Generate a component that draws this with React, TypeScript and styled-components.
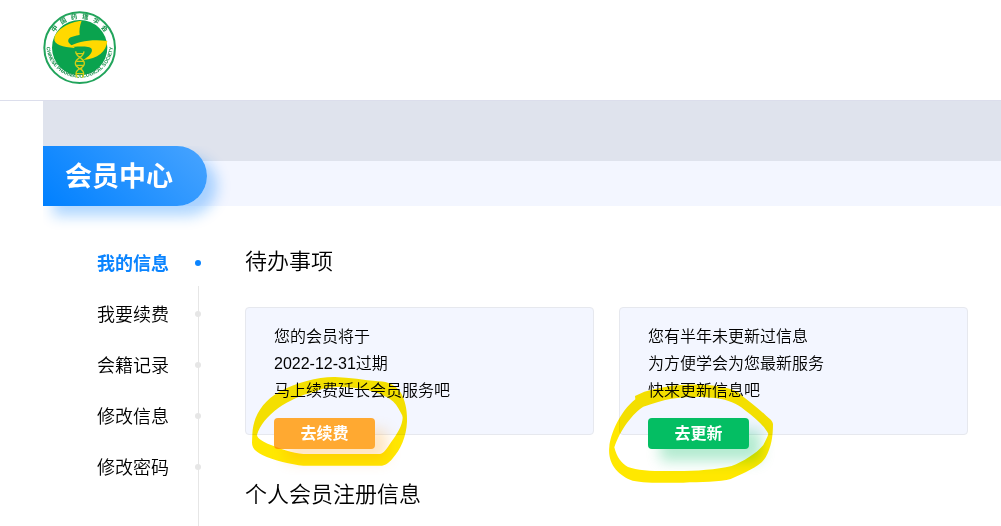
import React from 'react';
import styled, { createGlobalStyle } from 'styled-components';

const GlobalStyle = createGlobalStyle`
  *, *::before, *::after { box-sizing: border-box; }
  body {
    margin: 0;
    background: #fff;
    color: #000;
    font-family: "Liberation Sans", "Noto Sans CJK SC", sans-serif;
    font-weight: 350;
  }
  h1, h2, p, ul { margin: 0; padding: 0; }
  ul { list-style: none; }
`;

const Page = styled.div`
  display: flex;
  flex-direction: column;
  min-height: 100vh;
  overflow-x: hidden;
`;

const Header = styled.header`
  padding: 11px 43px 15px;
  border-bottom: 1px solid #dcdeec;
`;

const LogoLink = styled.a`
  display: block;
  width: 74px;
  height: 74px;

  svg { display: block; }
`;

const Content = styled.div`
  display: flex;
  flex-direction: column;
  flex: 1;
  margin-left: 43px;
`;

const Banner = styled.div`
  height: 60px;
  background: #dfe3ed;
`;

const TitleBar = styled.div`
  display: flex;
  align-items: flex-end;
  height: 45px;
  background: #f3f6ff;
`;

const TitleClip = styled.div`
  clip-path: inset(0 -40px -40px 0);
`;

const PageTitle = styled.h1`
  height: 60px;
  padding: 0 34px 0 22px;
  border-radius: 0 30px 30px 0;
  background: linear-gradient(45deg, #0080ff, #48a4ff);
  box-shadow: 10px 10px 14px rgba(10, 132, 255, 0.32);
  color: #fff;
  font-size: 27px;
  font-weight: 700;
  line-height: 62px;
`;

const Columns = styled.div`
  display: flex;
  flex: 1;
  gap: 44px;
  padding-right: 33px;
`;

const SideNav = styled.nav`
  position: relative;
  width: 158px;
  flex-shrink: 0;
  padding: 31px 0 0 54px;

  &::before {
    content: '';
    position: absolute;
    top: 80px;
    right: 2px;
    bottom: 0;
    width: 1px;
    background: #e6e6e6;
  }
`;

const NavLink = styled.a<{ $active?: boolean }>`
  display: flex;
  align-items: center;
  justify-content: space-between;
  height: 51px;
  color: ${({ $active }) => ($active ? '#0a84ff' : '#000')};
  font-size: 18px;
  font-weight: ${({ $active }) => ($active ? 700 : 350)};
  text-decoration: none;

  &::after {
    content: '';
    width: 6px;
    height: 6px;
    border-radius: 50%;
    background: ${({ $active }) => ($active ? '#0a84ff' : '#e6e6e6')};
  }
`;

const NavLabel = styled.span`
  padding-bottom: 2px;
`;

const Main = styled.main`
  flex: 1;
  padding: 38px 0 12px;
`;

const SectionTitle = styled.h2`
  color: #000;
  font-size: 22px;
  font-weight: 350;
  line-height: 36px;
`;

const CardGrid = styled.div`
  display: grid;
  grid-template-columns: 1fr 1fr;
  gap: 25px;
  margin: 27px 0 42px;
`;

const Card = styled.article`
  position: relative;
  height: 128px;
  padding: 15px 28px 0;
  border: 1px solid #e6e8ee;
  border-radius: 4px;
  background: #f3f6ff;
`;

const CardText = styled.p`
  font-size: 16px;
  line-height: 27px;
`;

const ActionButton = styled.button<{ $color: string; $shadow: string }>`
  display: block;
  width: 101px;
  height: 31px;
  margin-top: 14px;
  padding: 0;
  border: 0;
  border-radius: 4px;
  background: ${({ $color }) => $color};
  box-shadow: 12px 12px 14px ${({ $shadow }) => $shadow};
  color: #fff;
  font-family: inherit;
  font-size: 16px;
  font-weight: 700;
  line-height: 31px;
  cursor: pointer;
`;

const Highlight = styled.svg<{ $left: number }>`
  position: absolute;
  top: -8px;
  left: ${({ $left }) => $left}px;
  mix-blend-mode: multiply;
  pointer-events: none;
`;

const Logo = () => (
  <svg width="74" height="74" viewBox="0 0 222 222" role="img" aria-label="中国药理学会">
    <defs>
      <path id="ring-top" d="M22 111a88 88 0 0 1 176 0" />
      <path id="ring-bottom" d="M10 100a100 100 0 1 0 200 0" />
    </defs>
    <circle cx="110" cy="110" r="106" fill="#fff" stroke="#21a45b" strokeWidth="6" />
    <circle cx="110" cy="110" r="83" fill="#0aa34e" />
    <text fill="#16934c" fontSize="19" fontWeight="700" fontFamily="Noto Sans CJK SC, sans-serif">
      <textPath href="#ring-top" startOffset="50%" textAnchor="middle">中&#160;&#160; 国&#160;&#160; 药&#160;&#160; 理&#160;&#160; 学&#160;&#160; 会</textPath>
    </text>
    <text fill="#168c49" fontSize="15" fontWeight="700" fontFamily="Liberation Sans, sans-serif">
      <textPath href="#ring-bottom" startOffset="50%" textAnchor="middle">CHINESE PHARMACOLOGICAL SOCIETY</textPath>
    </text>
    <path
      fill="#ffd900"
      d="M116 29C80 32 37 56 34 82C32 103 60 108 94 111C100 108 71 99 76 86C80 75 100 75 110 71C108 60 110 44 116 29Z"
    />
    <path
      fill="#ffd900"
      d="M76 108C102 91 150 83 193 90C190 122 165 143 120 147C138 137 150 124 146 114C141 104 108 106 76 108Z"
    />
    <path
      d="M98 121c2 22 26 18 26 36s-25 13-25 31c0 5 2 9 4 12M123 121c-2 22-26 18-26 36s25 13 25 31c0 5-2 9-4 12M99 128h23M105 137h12M101 151h20M99 163h22M105 174h13M101 188h20"
      fill="none"
      stroke="#d5ce16"
      strokeWidth="4"
    />
  </svg>
);

const cards = [
  {
    lines: ['您的会员将于', '2022-12-31过期', '马上续费延长会员服务吧'],
    action: '去续费',
    color: '#ffa931',
    shadow: 'rgba(255, 169, 49, 0.3)',
    left: -11,
    stroke:
      'M52 402C54 350 82 305 135 274C185 248 250 230 300 231C345 232 385 240 430 244C455 243 484 256 498 279C510 300 517 330 516 365C514 410 497 448 472 476C460 490 450 497 436 497L205 497C170 494 115 481 82 465C62 455 51 444 51 428ZM66 405C74 375 98 348 130 324C162 302 200 284 238 276C280 254 346 260 390 268C435 280 475 294 490 325C496 337 503 345 503 353C502 375 488 400 468 427C456 446 445 462 434 462L205 462C173 459 135 446 98 431C82 423 68 417 66 405Z',
  },
  {
    lines: ['您有半年未更新过信息', '为方便学会为您最新服务', '快来更新信息吧'],
    action: '去更新',
    color: '#04be63',
    shadow: 'rgba(4, 190, 99, 0.3)',
    left: -20,
    stroke:
      'M28 440C31 405 58 336 106 298L105 288L133 275C170 265 210 255 260 254C315 253 370 256 414 276C438 300 470 319 494 343C506 355 519 362 519 373C519 408 514 442 497 472C483 498 437 517 392 537C362 547 300 545 250 548C190 549 130 549 98 542C54 526 22 490 28 440ZM43 442C50 472 65 490 84 501C115 513 170 514 230 513C290 513 350 509 395 498C430 484 468 462 490 435C496 423 503 410 505 402C496 382 470 357 434 330C410 310 384 300 350 295C310 290 260 289 215 296C190 300 160 310 130 320C100 338 60 390 43 442Z',
  },
];

const navItems = ['我的信息', '我要续费', '会籍记录', '修改信息', '修改密码'];

export default function App() {
  return (
    <Page>
      <GlobalStyle />
      <Header>
        <LogoLink href="#">
          <Logo />
        </LogoLink>
      </Header>
      <Content>
        <Banner />
        <TitleBar>
          <TitleClip>
            <PageTitle>会员中心</PageTitle>
          </TitleClip>
        </TitleBar>
        <Columns>
          <SideNav>
            <ul>
              {navItems.map((label, index) => (
                <li key={label}>
                  <NavLink href="#" $active={index === 0}>
                    <NavLabel>{label}</NavLabel>
                  </NavLink>
                </li>
              ))}
            </ul>
          </SideNav>
          <Main>
            <SectionTitle>待办事项</SectionTitle>
            <CardGrid>
              {cards.map((card) => (
                <Card key={card.action}>
                  {card.lines.map((line) => (
                    <CardText key={line}>{line}</CardText>
                  ))}
                  <ActionButton type="button" $color={card.color} $shadow={card.shadow}>
                    {card.action}
                  </ActionButton>
                  <Highlight $left={card.left} width="180" height="190" viewBox="0 0 540 570" aria-hidden="true">
                    <path d={card.stroke} fill="#ffe800" fillRule="evenodd" />
                  </Highlight>
                </Card>
              ))}
            </CardGrid>
            <SectionTitle>个人会员注册信息</SectionTitle>
          </Main>
        </Columns>
      </Content>
    </Page>
  );
}
